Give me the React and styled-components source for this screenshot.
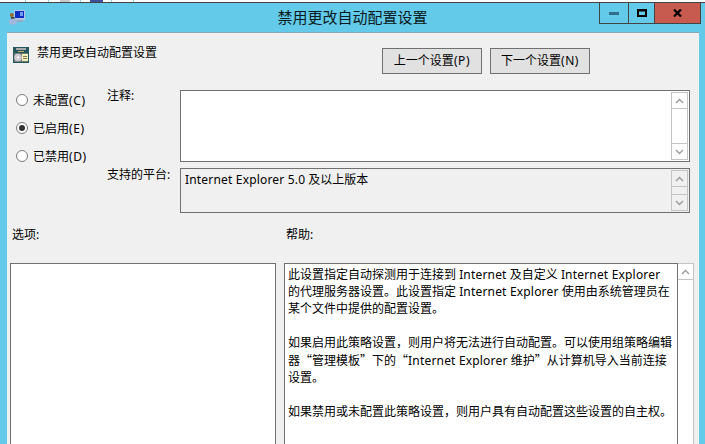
import React from 'react';
import styled, {createGlobalStyle} from 'styled-components';

const GlobalStyle = createGlobalStyle`
  html, body {
    margin: 0;
    padding: 0;
    background: #63cae9;
  }
  * {
    box-sizing: border-box;
  }
`;

const Window = styled.div`
  width: 705px;
  height: 444px;
  overflow: hidden;
  display: flex;
  flex-direction: column;
  background: #63cae9;
  color: #000;
  font-family: 'Noto Sans', 'Noto Sans CJK SC', sans-serif;
  font-size: 12px;
  line-height: 12px;
`;

const Latin = styled.span`
  letter-spacing: 0.18px;
`;
const Hotkey = styled.span`
  letter-spacing: 0.6px;
`;
const Quote = styled.span`
  font-family: 'Noto Sans CJK SC', sans-serif;
`;

const TaskStrip = styled.div`
  height: 3px;
  flex: none;
  display: flex;
  background: #fff;
  border-bottom: 1px solid #444;
`;
const TaskTab = styled.div`
  width: ${(p) => p.$w}px;
  flex: none;
  display: flex;
  justify-content: center;
  border-right: 1px solid #8fd0ea;
`;
const TaskMark = styled.div`
  width: ${(p) => p.$w}px;
  background: ${(p) => p.$c};
`;

const TitleBar = styled.div`
  height: 29px;
  flex: none;
  display: grid;
  grid-template-columns: 1fr auto 1fr;
  align-items: start;
`;
const TitleIcon = styled.svg`
  width: 16px;
  height: 16px;
  margin: 6px 0 0 9px;
`;
const TitleText = styled.div`
  font-size: 15px;
  line-height: 20px;
  margin-top: 4px;
  color: #0a1a20;
`;
const Captions = styled.div`
  justify-self: end;
  display: flex;
  margin-right: 4px;
  height: 21px;
  border: 1px solid #444;
  border-top: 0;
`;
const CaptionBtn = styled.div`
  width: ${(p) => p.$w}px;
  display: flex;
  align-items: center;
  justify-content: center;
  background: ${(p) => p.$bg || 'transparent'};
  border-left: ${(p) => (p.$first ? '0' : '1px solid #444')};
`;

const Client = styled.div`
  flex: 1;
  min-height: 0;
  margin: 0 6px 0 7px;
  background: #f0f0f0;
  border-top: 1px solid #8ea9b5;
  display: flex;
  flex-direction: column;
`;

const TopRow = styled.div`
  display: grid;
  grid-template-columns: 375px auto;
  align-items: start;
  padding-top: 14px;
  margin-bottom: 16px;
`;
const Heading = styled.div`
  display: flex;
  align-items: flex-start;
  gap: 8px;
  padding-left: 6px;
  height: 16px;
  line-height: 12px;
`;
const HeadingIcon = styled.svg`
  width: 16px;
  height: 16px;
  flex: none;
`;
const NavButtons = styled.div`
  display: flex;
  gap: 8px;
  margin-top: 1px;
`;
const NavButton = styled.div`
  width: 100px;
  height: 26px;
  display: flex;
  align-items: center;
  justify-content: center;
  background: #e1e1e1;
  border: 1px solid #707070;
`;

const SettingGrid = styled.div`
  display: grid;
  grid-template-columns: 100px 73px 510px;
  grid-template-rows: 72px 45px;
  row-gap: 6px;
`;
const RadioColumn = styled.div`
  grid-row: 1 / 3;
  display: flex;
  flex-direction: column;
  gap: 8px;
  padding-left: 9px;
`;
const RadioRow = styled.div`
  height: 20px;
  display: flex;
  align-items: center;
  gap: 5px;
`;
const RadioText = styled.span`
  padding-top: 2px;
`;
const RadioDot = styled.div`
  width: 12px;
  height: 12px;
  border-radius: 50%;
  border: 1px solid #7a7a7a;
  background: #fff;
  display: flex;
  align-items: center;
  justify-content: center;
  &::after {
    content: '';
    display: ${(p) => (p.$on ? 'block' : 'none')};
    width: 6px;
    height: 6px;
    border-radius: 50%;
    background: #333;
  }
`;
const FieldLabel = styled.div`
  grid-column: 2;
  padding-top: ${(p) => p.$top || 0}px;
`;
const Field = styled.div`
  grid-column: 3;
  display: flex;
  justify-content: space-between;
  padding: 1px;
  border: 1px solid #707070;
  background: ${(p) => (p.$readonly ? '#f0f0f0' : '#fff')};
`;
const FieldText = styled.div`
  padding: 1px 3px 0 3px;
  line-height: 17px;
`;

const ScrollBar = styled.div`
  width: 17px;
  flex: none;
  display: flex;
  flex-direction: column;
  justify-content: space-between;
  border: 1px solid #c4c4c4;
  border-width: 0 1px;
`;
const ScrollBtn = styled.div`
  height: 17px;
  display: flex;
  align-items: center;
  justify-content: center;
  border-top: 1px solid #c4c4c4;
  border-bottom: 1px solid #c4c4c4;
`;

const BottomGrid = styled.div`
  flex: 1;
  min-height: 0;
  margin-top: 16px;
  padding-left: 3px;
  display: grid;
  grid-template-columns: 266px 410px;
  column-gap: 8px;
`;
const Pane = styled.div`
  display: flex;
  flex-direction: column;
  gap: 22px;
  min-height: 0;
`;
const PaneLabel = styled.div`
  padding-left: 2px;
`;
const OptionsBox = styled.div`
  flex: 1;
  background: #fff;
  border: 1px solid #707070;
  border-bottom: 0;
`;
const HelpRow = styled.div`
  flex: 1;
  display: flex;
  min-height: 0;
`;
const HelpBox = styled.div`
  width: 394px;
  flex: none;
  background: #fff;
  border: 1px solid #707070;
  border-bottom: 0;
  padding: 2px 3px;
  line-height: 17px;
`;
const HelpBar = styled.div`
  flex: 1;
  background: #fff;
  border-top: 1px solid #c4c4c4;
  border-right: 1px solid #c4c4c4;
`;
const HelpBtn = styled.div`
  height: 16px;
  display: flex;
  align-items: center;
  justify-content: center;
  border-bottom: 1px solid #c4c4c4;
`;

const Chevron = ({down}) => (
  <svg width="9" height="6" viewBox="0 0 9 6">
    <polyline
      points={down ? '1,1 4.5,4.5 8,1' : '1,5 4.5,1.5 8,5'}
      fill="none"
      stroke="#9a9a9a"
      strokeWidth="1.4"
    />
  </svg>
);

const Bar = () => (
  <ScrollBar>
    <ScrollBtn>
      <Chevron />
    </ScrollBtn>
    <ScrollBtn>
      <Chevron down />
    </ScrollBtn>
  </ScrollBar>
);

const ComputerIcon = () => (
  <TitleIcon viewBox="0 0 16 16">
    <rect x="5" y="1" width="11" height="10" fill="#b4c6e2" />
    <rect x="6" y="2" width="9" height="7" fill="#0c2cc4" />
    <rect x="11" y="3" width="3" height="4" fill="#6fa0f0" />
    <rect x="8" y="11" width="6" height="2" fill="#98a8c0" />
    <circle cx="2.8" cy="6" r="2" fill="#9a6a28" />
    <rect x="2" y="8" width="3.5" height="2" fill="#3a3a30" />
    <ellipse cx="4" cy="12.6" rx="4" ry="3.2" fill="#9fb8dc" />
  </TitleIcon>
);

const PolicyIcon = () => (
  <HeadingIcon viewBox="0 0 16 16">
    <rect x="0" y="0" width="16" height="16" fill="#24565c" />
    <rect x="3" y="1" width="10" height="2" fill="#a9a9b0" />
    <rect x="5" y="4" width="6" height="1" fill="#c8b060" />
    <rect x="1" y="6" width="14" height="9" fill="#6f7a78" />
    <circle cx="5" cy="10.5" r="3.8" fill="#cfc9d2" />
    <circle cx="5" cy="10.5" r="1.1" fill="#fff" />
    <rect x="9" y="7" width="6" height="7" fill="#f6eebc" />
    <rect x="10" y="9" width="4" height="1" fill="#8a7a50" />
    <rect x="10" y="11" width="4" height="1" fill="#8a7a50" />
  </HeadingIcon>
);

const App = () => (
  <Window>
    <GlobalStyle />
    <TaskStrip>
      <TaskTab $w={26} />
      <TaskTab $w={23} />
      <TaskTab $w={32}>
        <TaskMark $w={10} $c="#c8c8c8" />
      </TaskTab>
      <TaskTab $w={31}>
        <TaskMark $w={13} $c="#3f4f9c" />
      </TaskTab>
      <TaskTab $w={22} />
    </TaskStrip>
    <TitleBar>
      <ComputerIcon />
      <TitleText>禁用更改自动配置设置</TitleText>
      <Captions>
        <CaptionBtn $w={28} $first>
          <svg width="10" height="3" viewBox="0 0 10 3">
            <rect width="10" height="3" fill="#2f6f8c" />
          </svg>
        </CaptionBtn>
        <CaptionBtn $w={26}>
          <svg width="10" height="8" viewBox="0 0 10 8">
            <path d="M0 0h10v8H0z M2 2.5v3.5h6V2.5z" fillRule="evenodd" fill="#000" />
          </svg>
        </CaptionBtn>
        <CaptionBtn $w={46} $bg="#c75b50">
          <svg width="9" height="8" viewBox="0 0 9 8">
            <path d="M1 0.5 L8 7.5 M8 0.5 L1 7.5" stroke="#000" strokeWidth="2.2" fill="none" />
          </svg>
        </CaptionBtn>
      </Captions>
    </TitleBar>
    <Client>
      <TopRow>
        <Heading>
          <PolicyIcon />
          禁用更改自动配置设置
        </Heading>
        <NavButtons>
          <NavButton>
            上一个设置<Hotkey>(P)</Hotkey>
          </NavButton>
          <NavButton>
            下一个设置<Hotkey>(N)</Hotkey>
          </NavButton>
        </NavButtons>
      </TopRow>
      <SettingGrid>
        <RadioColumn>
          <RadioRow>
            <RadioDot />
            <RadioText>
              未配置<Hotkey>(C)</Hotkey>
            </RadioText>
          </RadioRow>
          <RadioRow>
            <RadioDot $on />
            <RadioText>
              已启用<Hotkey>(E)</Hotkey>
            </RadioText>
          </RadioRow>
          <RadioRow>
            <RadioDot />
            <RadioText>
              已禁用<Hotkey>(D)</Hotkey>
            </RadioText>
          </RadioRow>
        </RadioColumn>
        <FieldLabel>注释:</FieldLabel>
        <Field>
          <FieldText />
          <Bar />
        </Field>
        <FieldLabel $top={1}>支持的平台:</FieldLabel>
        <Field $readonly>
          <FieldText>
            <Latin>Internet Explorer 5.0</Latin> 及以上版本
          </FieldText>
          <Bar />
        </Field>
      </SettingGrid>
      <BottomGrid>
        <Pane>
          <PaneLabel>选项:</PaneLabel>
          <OptionsBox />
        </Pane>
        <Pane>
          <PaneLabel>帮助:</PaneLabel>
          <HelpRow>
            <HelpBox>
              此设置指定自动探测用于连接到 <Latin>Internet</Latin> 及自定义 <Latin>Internet Explorer</Latin>
              <br />
              的代理服务器设置。此设置指定 <Latin>Internet Explorer</Latin> 使用由系统管理员在
              <br />
              某个文件中提供的配置设置。
              <br />
              <br />
              如果启用此策略设置，则用户将无法进行自动配置。可以使用组策略编辑
              <br />
              器<Quote>“</Quote>管理模板<Quote>”</Quote>下的<Quote>“</Quote>
              <Latin>Internet Explorer</Latin> 维护<Quote>”</Quote>从计算机导入当前连接
              <br />
              设置。
              <br />
              <br />
              如果禁用或未配置此策略设置，则用户具有自动配置这些设置的自主权。
            </HelpBox>
            <HelpBar>
              <HelpBtn>
                <Chevron />
              </HelpBtn>
            </HelpBar>
          </HelpRow>
        </Pane>
      </BottomGrid>
    </Client>
  </Window>
);

export default App;
